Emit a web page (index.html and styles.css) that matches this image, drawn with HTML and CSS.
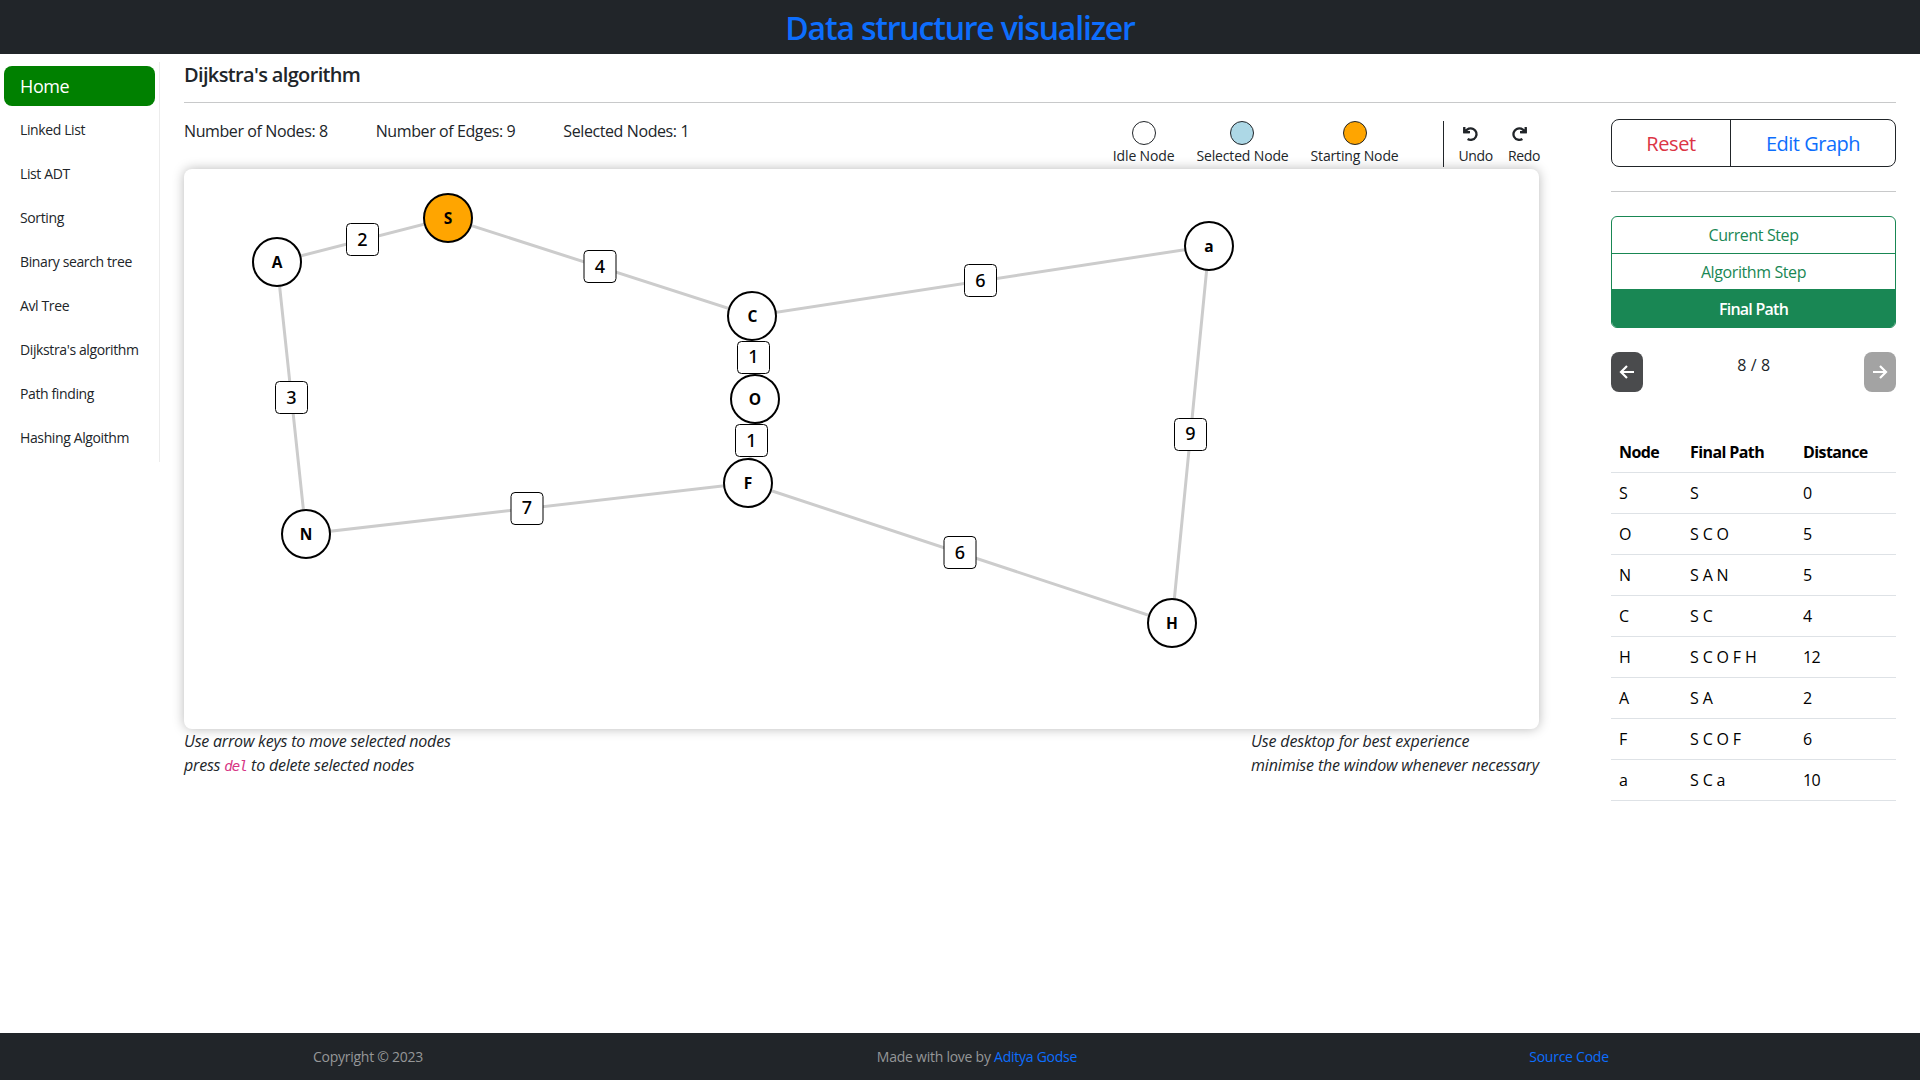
FILE: index.html
```html
<!DOCTYPE html>
<html lang="en">
<head>
<meta charset="utf-8">
<title>Data structure visualizer</title>
<link rel="stylesheet" href="styles.css">
</head>
<body>
<header class="topbar"><h1 class="brand">Data structure visualizer</h1></header>
<div class="layout">
  <nav class="sidebar">
    <a class="nav-link home">Home</a>
    <a class="nav-link">Linked List</a>
    <a class="nav-link">List ADT</a>
    <a class="nav-link">Sorting</a>
    <a class="nav-link">Binary search tree</a>
    <a class="nav-link">Avl Tree</a>
    <a class="nav-link">Dijkstra's algorithm</a>
    <a class="nav-link">Path finding</a>
    <a class="nav-link">Hashing Algoithm</a>
  </nav>
  <main class="content">
    <h2 class="page-title">Dijkstra's algorithm</h2>
    <div class="columns">
      <section class="board">
        <div class="toolbar">
          <div class="stats"><span>Number of Nodes: 8</span><span>Number of Edges: 9</span><span>Selected Nodes: 1</span></div>
          <div class="legend">
            <div class="legend-item"><i class="dot"></i><span>Idle Node</span></div>
            <div class="legend-item"><i class="dot selected"></i><span>Selected Node</span></div>
            <div class="legend-item"><i class="dot starting"></i><span>Starting Node</span></div>
          </div>
          <div class="history">
            <div class="history-item">
              <svg width="16" height="16" viewBox="0 0 16 16"><path class="ico" d="M1.3 1v5.2H7M2.4 5.8A5.8 5.8 0 1 1 4.6 13"/><path d="M.3 1.6L6.6 7.2H.3z"/></svg>
              <span>Undo</span>
            </div>
            <div class="history-item">
              <svg width="16" height="16" viewBox="0 0 16 16"><path class="ico" d="M13.7 1v5.2H8M12.6 5.8A5.8 5.8 0 1 0 10.4 13"/><path d="M14.7 1.6L8.4 7.2h6.3z"/></svg>
              <span>Redo</span>
            </div>
          </div>
        </div>
        <div class="canvas">
          <svg class="graph" width="1355" height="560" viewBox="184 169 1355 560">
            <g class="edges">
              <path d="M277 262L448 218L752 316L1209 246L1172 623L748 483L306 534Z"/>
              <path d="M752 316L755 399L748 483"/>
            </g>
            <g class="weights">
              <rect x="346.5" y="223.5" width="32" height="32" rx="4"/><text x="362.5" y="246">2</text>
              <rect x="584" y="250.5" width="32" height="32" rx="4"/><text x="600" y="273">4</text>
              <rect x="964.5" y="264.5" width="32" height="32" rx="4"/><text x="980.5" y="287">6</text>
              <rect x="737.5" y="341.5" width="32" height="32" rx="4"/><text x="753.5" y="363">1</text>
              <rect x="735.5" y="424.5" width="32" height="32" rx="4"/><text x="751.5" y="447">1</text>
              <rect x="275.5" y="381.5" width="32" height="32" rx="4"/><text x="291.5" y="404">3</text>
              <rect x="511" y="492.5" width="32" height="32" rx="4"/><text x="527" y="514">7</text>
              <rect x="944" y="536.5" width="32" height="32" rx="4"/><text x="960" y="559">6</text>
              <rect x="1174.5" y="418.5" width="32" height="32" rx="4"/><text x="1190.5" y="440">9</text>
            </g>
            <g class="nodes">
              <circle cx="277" cy="262" r="24"/><text x="277" y="268">A</text>
              <circle class="start" cx="448" cy="218" r="24"/><text x="448" y="224">S</text>
              <circle cx="752" cy="316" r="24"/><text x="752.5" y="322">C</text>
              <circle cx="755" cy="399" r="24"/><text x="755" y="405">O</text>
              <circle cx="748" cy="483" r="24"/><text x="748" y="489">F</text>
              <circle cx="306" cy="534" r="24"/><text x="306" y="540">N</text>
              <circle cx="1209" cy="246" r="24"/><text x="1209" y="252">a</text>
              <circle cx="1172" cy="623" r="24"/><text x="1172" y="629">H</text>
            </g>
          </svg>
        </div>
        <div class="hints">
          <p>Use arrow keys to move selected nodes<br>press <code>del</code> to delete selected nodes</p>
          <p class="tips">Use desktop for best experience<br>minimise the window whenever necessary</p>
        </div>
      </section>
      <aside class="panel">
        <div class="actions"><button class="reset">Reset</button><button class="edit">Edit Graph</button></div>
        <hr>
        <div class="modes"><button>Current Step</button><button>Algorithm Step</button><button class="active">Final Path</button></div>
        <div class="stepper">
          <button class="step"><svg width="16" height="16" viewBox="0 0 16 16"><path d="M8 2L2 8l6 6M2 8h13"/></svg></button>
          <span class="count">8 / 8</span>
          <button class="step next"><svg width="16" height="16" viewBox="0 0 16 16"><path d="M8 2l6 6-6 6M14 8H1"/></svg></button>
        </div>
        <table class="results">
          <thead><tr><th>Node</th><th>Final Path</th><th>Distance</th></tr></thead>
          <tbody>
            <tr><td>S</td><td>S</td><td>0</td></tr>
            <tr><td>O</td><td>S C O</td><td>5</td></tr>
            <tr><td>N</td><td>S A N</td><td>5</td></tr>
            <tr><td>C</td><td>S C</td><td>4</td></tr>
            <tr><td>H</td><td>S C O F H</td><td>12</td></tr>
            <tr><td>A</td><td>S A</td><td>2</td></tr>
            <tr><td>F</td><td>S C O F</td><td>6</td></tr>
            <tr><td>a</td><td>S C a</td><td>10</td></tr>
          </tbody>
        </table>
      </aside>
    </div>
  </main>
</div>
<footer class="footer"><span>Copyright © 2023</span><span>Made with love by <a>Aditya Godse</a></span><a>Source Code</a></footer>
</body>
</html>
```
FILE: styles.css
```css
* { box-sizing: border-box; }
body { margin: 0; height: 1080px; display: flex; flex-direction: column; overflow: hidden; background: #fff; color: #212529; font: 16px/24px "Open Sans", "Noto Sans", sans-serif; letter-spacing: -0.4px; }
h1, h2, p { margin: 0; }
button { font: inherit; letter-spacing: inherit; background: none; border: 0; padding: 0; }
.topbar { height: 54px; background: #212529; text-align: center; }
.brand { font-size: 32px; line-height: 56px; font-weight: 600; color: #0d6efd; letter-spacing: -1.2px; }
.layout { flex: 1; display: flex; align-items: flex-start; }
.sidebar { width: 160px; margin-top: 8px; padding: 4px 4px 0; height: 400px; border-right: 1px solid #ececec; }
.nav-link { display: flex; align-items: center; height: 40px; margin-bottom: 4px; padding-left: 16px; font-size: 14px; letter-spacing: -0.38px; white-space: nowrap; }
.home { background: green; color: #fff; border-radius: 8px; font-size: 18px; }
.content { flex: 1; margin: 0 24px; }
.page-title { height: 49px; padding-top: 9px; border-bottom: 1px solid #c8c9ca; font-size: 20px; font-weight: 600; letter-spacing: -0.65px; }
.columns { display: flex; justify-content: space-between; }
.board { width: 1355px; }
.toolbar { display: flex; height: 66px; padding-top: 16px; }
.stats { display: flex; gap: 48px; flex: 1; }
.legend { display: flex; gap: 22px; margin-right: 44px; }
.legend-item, .history-item { display: flex; flex-direction: column; align-items: center; font-size: 14px; line-height: 20px; letter-spacing: -0.15px; }
.legend-item span, .history-item span { margin-top: -1px; }
.dot { width: 24px; height: 24px; margin: 2px 0; border: 1px solid #212529; border-radius: 50%; }
.selected { background: lightblue; }
.starting { background: orange; }
.history { display: flex; gap: 15px; height: 46px; margin-top: 2px; margin-right: -1px; border-left: 1px solid #212529; padding-left: 15px; }
.history-item { align-items: flex-start; letter-spacing: -0.35px; }
.history-item svg { margin: 5px 0 5px 4px; fill: #212529; }
.history-item .ico { fill: none; stroke: #212529; stroke-width: 2.3; }
.canvas { height: 560px; border-radius: 8px; background: #fff; box-shadow: 0 0 12px rgba(0,0,0,.28); }
.graph { display: block; }
.edges { fill: none; stroke: #ccc; stroke-width: 3; }
.weights rect { fill: #fff; stroke: #000; }
.weights text { font-family: "Noto Sans", "Open Sans", sans-serif; font-size: 18px; font-weight: 500; text-anchor: middle; letter-spacing: 0; }
.nodes circle { fill: #fff; stroke: #000; stroke-width: 2; }
.nodes .start { fill: orange; }
.nodes text { font-size: 15.5px; font-weight: 700; text-anchor: middle; letter-spacing: 0; fill: #000; }
.hints { display: flex; justify-content: space-between; font-style: italic; white-space: nowrap; letter-spacing: -0.21px; }
.tips { letter-spacing: -0.16px; }
code { font: italic 14px "DejaVu Sans Mono", monospace; color: #d63384; letter-spacing: -0.8px; }
.panel { width: 285px; padding-top: 16px; }
.actions { display: flex; height: 48px; border: 1px solid #212529; border-radius: 8px; font-size: 20px; }
.actions button { padding-top: 2px; }
.actions .reset { width: 119px; border-right: 1px solid #212529; color: #dc3545; }
.edit { flex: 1; color: #0d6efd; letter-spacing: -0.5px; }
hr { margin: 24px 0; border: 0; height: 1px; background: #c8c9ca; }
.modes { display: flex; flex-direction: column; height: 112px; border: 1px solid #198754; border-radius: 6px; overflow: hidden; }
.modes button { height: 37px; padding-top: 1px; color: #198754; border-bottom: 1px solid #198754; }
.modes .active { padding-top: 2px; background: #198754; color: #fff; font-weight: 600; letter-spacing: -0.75px; }
.stepper { display: flex; justify-content: space-between; margin-top: 24px; }
.count { padding-top: 1px; word-spacing: 1px; }
.step { width: 32px; height: 40px; padding-top: 4px; border-radius: 8px; background: #4a4b4d; }
.step path { fill: none; stroke: #fff; stroke-width: 2.2; }
.next { background: #a3a3a3; }
.results { width: 100%; margin-top: 40px; border-collapse: collapse; table-layout: fixed; color: #000; }
.results td { height: 41px; padding: 1px 8px 0; border-bottom: 1px solid #dee2e6; letter-spacing: -0.6px; word-spacing: 0.9px; }
.results th { height: 40px; padding: 1px 8px 0; border-bottom: 1px solid #dee2e6; text-align: left; font-weight: 700; letter-spacing: -0.6px; }
.results th:nth-child(1) { width: 71px; }
.results th:nth-child(2) { width: 113px; }
.footer { display: grid; grid-template-columns: 736px 482px 702px; text-align: center; height: 47px; line-height: 48px; font-size: 14px; background: #212529; color: #959798; letter-spacing: -0.25px; }
.footer a { color: #0d6efd; }
```
